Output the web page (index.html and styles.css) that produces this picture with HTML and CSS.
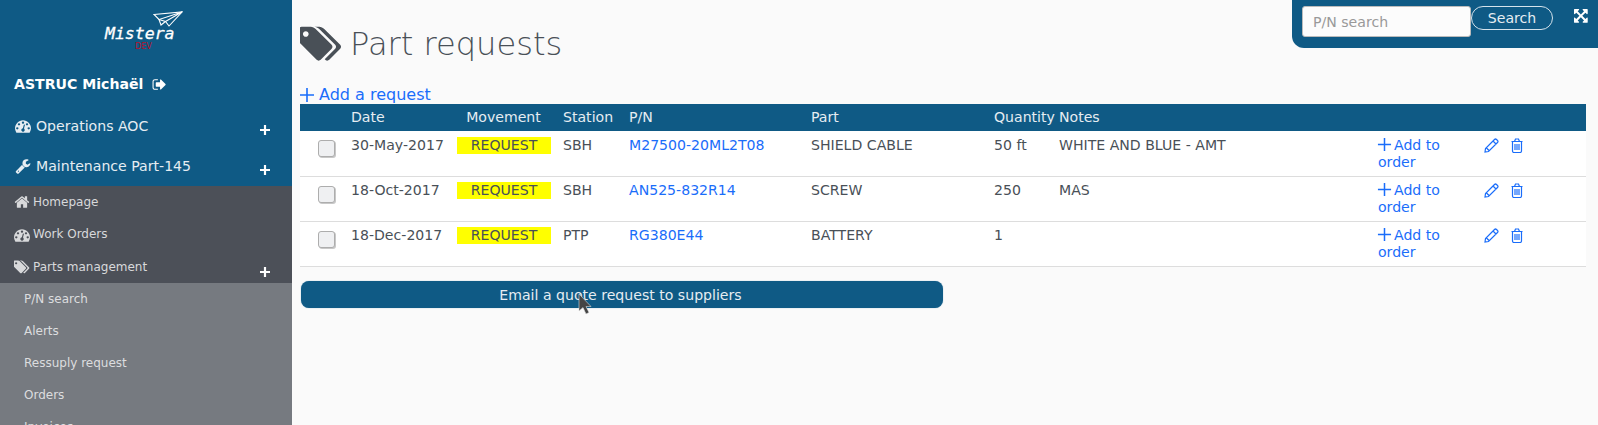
FILE: index.html
```html
<!DOCTYPE html>
<html lang="en">
<head>
  <meta charset="UTF-8" />
  <title>Part requests</title>
  <link rel="stylesheet" href="styles.css">
</head>
<body>

<svg class="icon-defs">
  <symbol id="i-tags" viewBox="0 0 1920 1792"><path d="M384 448q0-53-37.500-90.500t-90.500-37.500-90.500 37.500-37.500 90.500 37.500 90.500 90.500 37.500 90.500-37.500 37.500-90.500zm1067 576q0 53-37 90l-491 492q-39 37-91 37-53 0-90-37l-715-716q-38-37-64.500-101t-26.500-117v-416q0-52 38-90t90-38h416q53 0 117 26.500t102 64.500l715 714q37 39 37 91zm384 0q0 53-37 90l-491 492q-39 37-91 37-36 0-59-14t-53-45l470-470q37-37 37-90 0-52-37-91l-715-714q-38-38-102-64.500t-117-26.500h224q53 0 117 26.500t102 64.500l715 714q37 39 37 91z"/></symbol>
  <symbol id="i-home" viewBox="0 0 1792 1792"><path d="M1472 992v480q0 26-19 45t-45 19h-384v-384h-256v384h-384q-26 0-45-19t-19-45v-480q0-1 .5-3t.5-3l575-474 575 474q1 2 1 6zm223-69l-62 74q-8 9-21 11h-3q-13 0-21-7l-692-577-692 577q-12 8-24 7-13-2-21-11l-62-74q-8-10-7-23.500t11-21.500l719-599q32-26 76-26t76 26l244 204v-195q0-14 9-23t23-9h192q14 0 23 9t9 23v408l219 182q10 8 11 21.500t-7 23.500z"/></symbol>
  <symbol id="i-gauge" viewBox="0 0 1792 1792"><path d="M384 1152q0-53-37.500-90.500t-90.500-37.500-90.500 37.500-37.500 90.500 37.500 90.500 90.500 37.500 90.500-37.500 37.500-90.500zm192-448q0-53-37.500-90.500t-90.500-37.500-90.500 37.500-37.500 90.500 37.500 90.500 90.500 37.500 90.500-37.500 37.500-90.500zm428 481l101-382q6-26-7.500-48.500t-38.500-29.500-48 6.500-30 39.500l-101 382q-60 5-107 43.500t-63 98.500q-20 77 20 146t117 89 146-20 89-117q16-60-6-117t-72-91zm660-33q0-53-37.500-90.500t-90.500-37.500-90.500 37.500-37.500 90.500 37.500 90.500 90.500 37.500 90.500-37.500 37.500-90.500zm-640-640q0-53-37.500-90.500t-90.500-37.500-90.500 37.500-37.500 90.500 37.500 90.500 90.500 37.500 90.500-37.500 37.500-90.500zm448 192q0-53-37.500-90.500t-90.500-37.500-90.500 37.500-37.500 90.500 37.500 90.500 90.500 37.500 90.500-37.500 37.500-90.500zm320 448q0 261-141 483-19 29-54 29h-1402q-35 0-54-29-141-221-141-483 0-182 71-348t191-286 286-191 348-71 348 71 286 191 191 286 71 348z"/></symbol>
  <symbol id="i-wrench" viewBox="0 0 1792 1792"><path d="M448 1472q0-26-19-45t-45-19-45 19-19 45 19 45 45 19 45-19 19-45zm644-420l-682 682q-37 37-90 37-52 0-91-37l-106-108q-38-36-38-90 0-53 38-91l681-681q39 98 114.500 173.500t173.500 114.500zm634-435q0 39-23 106-47 134-164.500 217.500t-258.500 83.500q-185 0-316.500-131.500t-131.500-316.500 131.500-316.500 316.500-131.500q58 0 121.500 16.500t107.500 46.500q16 11 16 28t-16 28l-293 169v224l193 107q5-3 79-48.500t135.500-81 70.500-35.500q15 0 23.500 10t8.500 25z"/></symbol>
  <symbol id="i-signout" viewBox="0 0 1792 1792"><path d="M704 1440q0 4 1 20t.5 26.500-3 23.500-10 19.500-20.500 6.500h-320q-119 0-203.500-84.500t-84.500-203.500v-704q0-119 84.500-203.500t203.500-84.500h320q13 0 22.500 9.500t9.500 22.500q0 4 1 20t.5 26.500-3 23.500-10 19.500-20.500 6.500h-320q-66 0-113 47t-47 113v704q0 66 47 113t113 47h312l11.500 1 11.500 3 8 5.500 7 9 2 13.500zm928-544q0 26-19 45l-544 544q-19 19-45 19t-45-19-19-45v-288h-448q-26 0-45-19t-19-45v-384q0-26 19-45t45-19h448v-288q0-26 19-45t45-19 45 19l544 544q19 19 19 45z"/></symbol>
  <symbol id="i-pencil" viewBox="0 0 15 15"><path fill="none" stroke="currentColor" stroke-width="1.200" d="M1 14 1.500 10.500 10.500 1.500Q11.500 .5 12.500 1.500L13.500 2.500Q14.500 3.500 13.500 4.500L4.500 13.500ZM9 3 12 6M2.500 10 5 12.500"/></symbol>
  <symbol id="i-trash" viewBox="0 0 12 15"><path fill="none" stroke="currentColor" stroke-width="1.200" d="M.5 3.500H11.500M1.500 3.500V13Q1.500 14.500 3 14.500H9Q10.500 14.500 10.500 13V3.500M3.500 3.500 4.500 1H7.500L8.500 3.500M4 6V12M6 6V12M8 6V12"/></symbol>
  <symbol id="i-expand" viewBox="0 0 1792 1792"><path d="M1283 413l-355 355 355 355 144-144q29-31 70-14 39 17 39 59v448q0 26-19 45t-45 19h-448q-42 0-59-40-17-39 14-69l144-144-355-355-355 355 144 144q31 30 14 69-17 40-59 40h-448q-26 0-45-19t-19-45v-448q0-42 40-59 39-17 69 14l144 144 355-355-355-355-144 144q-19 19-45 19-12 0-24-5-40-17-40-59v-448q0-26 19-45t45-19h448q42 0 59 40 17 39-14 69l-144 144 355 355 355-355-144-144q-31-30-14-69 17-40 59-40h448q26 0 45 19t19 45v448q0 42-39 59-13 5-25 5-26 0-45-19z"/></symbol>
  <symbol id="i-plus" viewBox="0 0 16 16"><path d="M7.200 1h1.600v6.200h6.200v1.600h-6.200v6.200h-1.600v-6.200h-6.200v-1.600h6.200z"/></symbol>
  <symbol id="i-plus-bold" viewBox="0 0 11 11"><path d="M4.300 0h2.400v4.300h4.300v2.400h-4.300v4.300h-2.400v-4.300h-4.300v-2.400h4.300z"/></symbol>
</svg>

<aside class="sidebar">
  <div class="logo">
    <svg class="logo-plane" viewBox="0 0 30 16" fill="none" stroke="#fff" stroke-width="1.100">
      <path d="M1 3.500 29 1 16 15 12.500 10.500 6 8.500z"/>
      <path d="M29 1 6 8.500 8 14 12.500 10.500M29 1 12.500 10.500"/>
    </svg>
    <div class="logo-name">Mistera</div>
    <div class="logo-dev">DEV</div>
  </div>

  <div class="user">ASTRUC Michaël <svg class="ic ic-signout"><use href="#i-signout"/></svg></div>

  <a class="nav-main"><svg class="ic"><use href="#i-gauge"/></svg><span>Operations AOC</span><svg class="nav-plus"><use href="#i-plus-bold"/></svg></a>
  <a class="nav-main"><svg class="ic"><use href="#i-wrench"/></svg><span>Maintenance Part-145</span><svg class="nav-plus"><use href="#i-plus-bold"/></svg></a>

  <div class="nav-group">
    <a class="nav-item"><svg class="ic"><use href="#i-home"/></svg><span>Homepage</span></a>
    <a class="nav-item"><svg class="ic"><use href="#i-gauge"/></svg><span>Work Orders</span></a>
    <a class="nav-item"><svg class="ic"><use href="#i-tags"/></svg><span>Parts management</span><svg class="nav-plus"><use href="#i-plus-bold"/></svg></a>
  </div>

  <div class="nav-sub">
    <a class="nav-subitem">P/N search</a>
    <a class="nav-subitem">Alerts</a>
    <a class="nav-subitem">Ressuply request</a>
    <a class="nav-subitem">Orders</a>
    <a class="nav-subitem">Invoices</a>
  </div>
</aside>

<main class="content">
  <h1 class="page-title"><svg class="title-icon"><use href="#i-tags"/></svg>Part requests</h1>

  <a class="add-link"><svg class="add-plus"><use href="#i-plus"/></svg>Add a request</a>

  <table class="requests">
    <thead>
      <tr>
        <th class="col-check"></th>
        <th class="col-date">Date</th>
        <th class="col-move">Movement</th>
        <th class="col-station">Station</th>
        <th class="col-pn">P/N</th>
        <th class="col-part">Part</th>
        <th class="col-qty">Quantity</th>
        <th class="col-notes">Notes</th>
        <th class="col-order"></th>
        <th class="col-actions"></th>
      </tr>
    </thead>
    <tbody>
      <tr>
        <td class="cell-check"><input type="checkbox"></td>
        <td>30-May-2017</td>
        <td><div class="badge">REQUEST</div></td>
        <td>SBH</td>
        <td><a>M27500-20ML2T08</a></td>
        <td>SHIELD CABLE</td>
        <td>50 ft</td>
        <td>WHITE AND BLUE - AMT</td>
        <td><a><svg class="order-plus"><use href="#i-plus"/></svg>Add to order</a></td>
        <td class="cell-actions"><svg class="act-pencil"><use href="#i-pencil"/></svg><svg class="act-trash"><use href="#i-trash"/></svg></td>
      </tr>
      <tr>
        <td class="cell-check"><input type="checkbox"></td>
        <td>18-Oct-2017</td>
        <td><div class="badge">REQUEST</div></td>
        <td>SBH</td>
        <td><a>AN525-832R14</a></td>
        <td>SCREW</td>
        <td>250</td>
        <td>MAS</td>
        <td><a><svg class="order-plus"><use href="#i-plus"/></svg>Add to order</a></td>
        <td class="cell-actions"><svg class="act-pencil"><use href="#i-pencil"/></svg><svg class="act-trash"><use href="#i-trash"/></svg></td>
      </tr>
      <tr>
        <td class="cell-check"><input type="checkbox"></td>
        <td>18-Dec-2017</td>
        <td><div class="badge">REQUEST</div></td>
        <td>PTP</td>
        <td><a>RG380E44</a></td>
        <td>BATTERY</td>
        <td>1</td>
        <td></td>
        <td><a><svg class="order-plus"><use href="#i-plus"/></svg>Add to order</a></td>
        <td class="cell-actions"><svg class="act-pencil"><use href="#i-pencil"/></svg><svg class="act-trash"><use href="#i-trash"/></svg></td>
      </tr>
    </tbody>
  </table>

  <div class="email-wrap">
    <button class="email-btn">Email a quote request to suppliers</button>
    <svg class="cursor" viewBox="0 0 14 22"><path d="M1 1v17l4-3.500 3 6.500 3-1.500-3-6h5z" fill="#444" stroke="#ddd" stroke-width=".6"/></svg>
  </div>

  <div class="search-panel">
    <input class="search-input" type="text" placeholder="P/N search">
    <button class="search-btn">Search</button>
    <svg class="expand"><use href="#i-expand"/></svg>
  </div>
</main>

</body>
</html>
```

FILE: styles.css
```css
* {
  box-sizing: border-box;
}
html, body {
  height: 100%;
}
body {
  margin: 0;
  display: flex;
  overflow: hidden;
  background: #fafafa;
  color: #495057;
  font-family: "DejaVu Sans", sans-serif;
  font-size: 14.1px;
  line-height: 17px;
}
a {
  color: #1a6dfa;
}
.icon-defs {
  display: none;
}
.ic {
  width: 16px;
  height: 16px;
  fill: currentColor;
  flex: none;
}

/* sidebar */
.sidebar {
  width: 292px;
  flex: none;
  background: #0f5a85;
  color: #e6edf2;
}
.logo {
  height: 70px;
  position: relative;
}
.logo-plane {
  position: absolute;
  left: 153px;
  top: 11px;
  width: 30px;
  height: 16px;
}
.logo-name {
  position: absolute;
  left: 105px;
  top: 24px;
  color: #fff;
  font-family: "DejaVu Sans Mono", monospace;
  font-style: italic;
  font-size: 16.500px;
  line-height: 20px;
  -webkit-text-stroke: .3px #fff;
}
.logo-dev {
  position: absolute;
  left: 135px;
  top: 42px;
  color: #b5122b;
  font-size: 8px;
  line-height: 9px;
}
.user {
  height: 36px;
  padding: 0 0 7px 14px;
  display: flex;
  align-items: center;
  color: #fff;
  font-weight: bold;
}
.ic-signout {
  width: 15px;
  height: 15px;
  margin-left: 9px;
}
.nav-main {
  height: 40px;
  padding-left: 15px;
  display: flex;
  align-items: center;
  color: #e6edf2;
}
.nav-main .ic {
  margin-right: 5px;
}
.nav-plus {
  width: 10px;
  height: 10px;
  margin-left: auto;
  margin-right: 22px;
  margin-top: 7px;
  fill: #fff;
}
.nav-group {
  background: #4c5058;
}
.nav-item {
  height: 32.400px;
  padding: .8px 0 0 14px;
  display: flex;
  align-items: center;
  color: #d8d9db;
  font-size: 12px;
}
.nav-item:first-child {
  padding-top: 0;
}
.nav-item .ic {
  margin-right: 3px;
}
.nav-item .nav-plus {
  margin-top: 10px;
}
.nav-sub {
  background: #767a80;
}
.nav-subitem {
  height: 32px;
  padding-left: 24px;
  display: flex;
  align-items: center;
  color: #dcdddf;
  font-size: 12px;
}

/* main column */
.content {
  flex: 1;
  position: relative;
  padding: 0 12px 0 8px;
}
.page-title {
  margin: 0;
  height: 80px;
  padding-top: 24px;
  display: flex;
  align-items: flex-start;
  font-size: 32.100px;
  font-weight: 200;
  line-height: 40px;
  color: #495057;
}
.title-icon {
  width: 43px;
  height: 40px;
  margin-right: 7px;
  fill: #495057;
}
.add-link {
  display: flex;
  align-items: flex-end;
  height: 24px;
  font-size: 16px;
  line-height: 18px;
  color: #1a6dfa;
}
.add-plus {
  width: 16px;
  height: 16px;
  margin: 0 4px 1px -1px;
  fill: #1a6dfa;
}
.requests {
  width: 1286px;
  table-layout: fixed;
  border-collapse: collapse;
}
.requests th {
  height: 27px;
  padding: 0 6px;
  background: #0f5a85;
  color: #e6edf2;
  font-weight: normal;
  text-align: left;
}
.requests td {
  height: 45px;
  padding: 5px 6px;
  vertical-align: top;
  background: #fff;
  border-bottom: 1px solid #ddd;
}
.requests tbody tr:first-child td:not(.cell-check) {
  padding-top: 6px;
}
.col-check { width: 45px; }
.col-date { width: 106px; }
.requests .col-move { width: 106px; padding-right: 7px; text-align: center; }
.col-station { width: 66px; }
.col-pn { width: 182px; }
.col-part { width: 183px; }
.col-qty { width: 65px; }
.col-notes { width: 319px; }
.col-order { width: 104px; }
.col-actions { width: 110px; }
.cell-check input {
  appearance: none;
  width: 17px;
  height: 17px;
  margin: 4px 0 0 12px;
  display: block;
  background: #eff0f2;
  border: 1px solid #adadad;
  border-radius: 3px;
  box-shadow: 1px 1px 0 #c8c8c8;
}
.badge {
  height: 17px;
  background: #ffff00;
  text-align: center;
}
.order-plus {
  width: 15px;
  height: 15px;
  margin: 0 2px 0 -1px;
  vertical-align: -2px;
  fill: #1a6dfa;
}
.cell-actions {
  color: #1a6dfa;
}
.act-pencil {
  width: 15px;
  height: 15px;
  margin: 1px 0 0 2px;
  vertical-align: top;
}
.act-trash {
  width: 12px;
  height: 15px;
  margin: 1px 0 0 12px;
  vertical-align: top;
}

/* email button and pointer */
.email-wrap {
  position: relative;
  margin: 14px 0 0 1px;
  width: 642px;
}
.email-btn {
  display: block;
  width: 100%;
  height: 27px;
  border: none;
  border-radius: 8px;
  box-shadow: 0 0 1px #6a9ab8;
  background: #0f5a85;
  color: #e6edf2;
  font-family: inherit;
  font-size: 14.100px;
  padding: 0 3px 0 0;
}
.cursor {
  position: absolute;
  left: 277px;
  top: 12px;
  width: 14px;
  height: 22px;
}

/* top right search panel */
.search-panel {
  position: absolute;
  top: 0;
  right: 0;
  width: 306px;
  height: 48px;
  padding: 6px 0 0 10px;
  display: flex;
  align-items: flex-start;
  background: #0f5a85;
  border-bottom-left-radius: 12px;
}
.search-input {
  width: 169px;
  height: 31px;
  padding: 0 10px;
  border: 1px solid #bbb;
  border-radius: 3px;
  background: #fcfcfc;
  font-family: inherit;
  font-size: 14.100px;
}
.search-input::placeholder {
  color: #999;
}
.search-btn {
  width: 82px;
  height: 24px;
  padding: 0;
  border: 1px solid #d5e3ec;
  border-radius: 12px;
  background: #0f5a85;
  color: #e6edf2;
  font-family: inherit;
  font-size: 14.100px;
}
.expand {
  width: 16px;
  height: 16px;
  margin: 3px 0 0 21px;
  fill: #fff;
}
```
